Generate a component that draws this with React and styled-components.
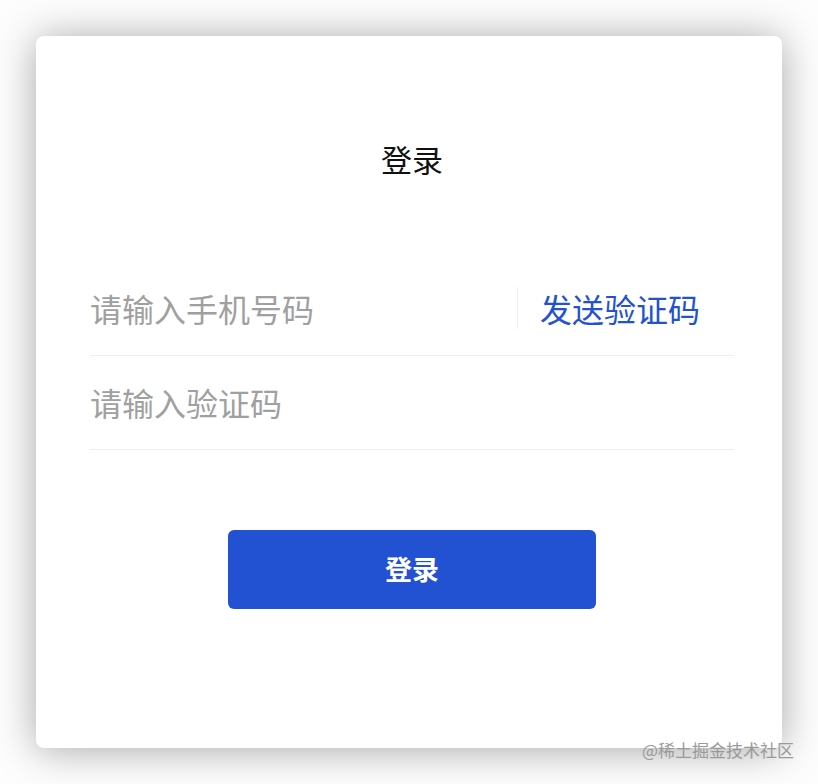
import React from "react";
import styled, { createGlobalStyle } from "styled-components";

const GlobalStyle = createGlobalStyle`
  html, body {
    margin: 0;
    padding: 0;
    background: #fdfdfd;
    font-family: "Noto Sans CJK SC", "Noto Sans", sans-serif;
  }
`;

const Page = styled.div`
  position: relative;
  width: 818px;
  height: 784px;
  padding: 36px;
  box-sizing: border-box;
`;

const Card = styled.div`
  width: 746px;
  height: 712px;
  box-sizing: border-box;
  background: #ffffff;
  border-radius: 8px;
  box-shadow: 0 2px 40px rgba(0, 0, 0, 0.34);
  padding: 103px 48px 0 54px;
  display: flex;
  flex-direction: column;
  align-items: center;
`;

const Title = styled.div`
  font-size: 31px;
  line-height: 40px;
  color: #111;
  margin-bottom: 83px;
`;

const Form = styled.div`
  width: 644px;
  align-self: flex-start;
  display: flex;
  flex-direction: column;
`;

const Row = styled.div`
  height: 94px;
  display: flex;
  align-items: center;
  border-bottom: 1px solid #eeeeee;
  padding-bottom: 2px;
  box-sizing: border-box;
`;

const Input = styled.input`
  flex: 1;
  min-width: 0;
  border: none;
  outline: none;
  background: transparent;
  font-family: inherit;
  font-size: 32px;
  padding: 0;
  color: #333;
  &::placeholder {
    color: #a0a0a0;
  }
`;

const Divider = styled.span`
  width: 1px;
  height: 42px;
  background: #eeeeee;
  margin-right: 22px;
`;

const SendCode = styled.span`
  font-size: 32px;
  color: #2252d0;
  margin-right: 34px;
  white-space: nowrap;
`;

const LoginButton = styled.button`
  margin-top: 80px;
  width: 368px;
  height: 79px;
  border: none;
  border-radius: 6px;
  background: #2251d1;
  color: #fff;
  font-family: inherit;
  font-size: 27px;
  font-weight: 700;
  padding: 0 0 3px;
  cursor: pointer;
`;

const Watermark = styled.div`
  position: absolute;
  left: 642px;
  top: 739px;
  font-size: 17px;
  line-height: 22px;
  color: #9a9a9a;
  white-space: nowrap;
`;

const App = () => {
  return (
    <Page>
      <GlobalStyle />
      <Card>
        <Title>登录</Title>
        <Form>
          <Row>
            <Input placeholder="请输入手机号码" />
            <Divider />
            <SendCode>发送验证码</SendCode>
          </Row>
          <Row>
            <Input placeholder="请输入验证码" />
          </Row>
        </Form>
        <LoginButton>登录</LoginButton>
      </Card>
      <Watermark>@稀土掘金技术社区</Watermark>
    </Page>
  );
};

export default App;
